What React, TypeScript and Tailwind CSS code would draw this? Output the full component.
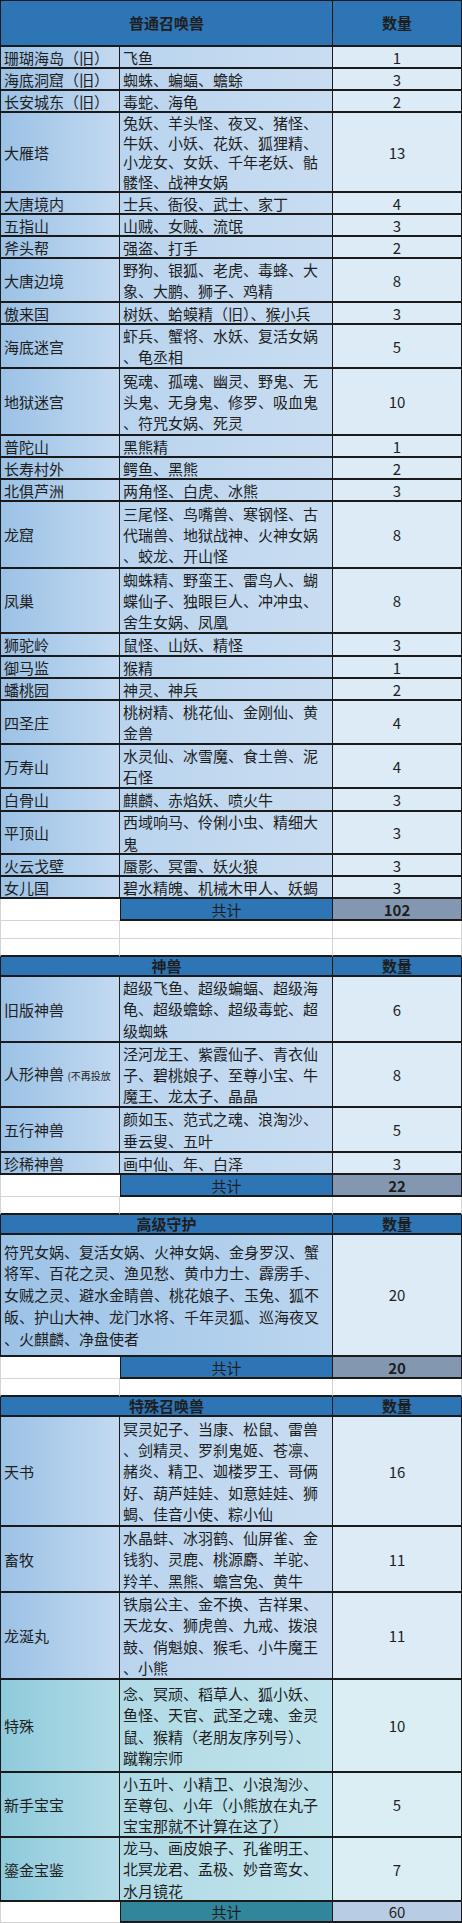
import type { ReactNode } from 'react'

type Row = {
  place: ReactNode
  lines: string[]
  count: string
  h: string
  teal?: boolean
  tight?: boolean
}

const dark = 'border-[#1a1a1a]'
const grid = 'grid grid-cols-[120px_213px_129px] grid-rows-1'

const blue = {
  c1: 'bg-linear-to-r from-[#9bc2e6] to-[#c3d9f0]',
  c2: 'bg-linear-to-r from-[#b9d4ee] to-[#c9ddf1]',
  c3: 'bg-[#ddebf7]',
}
const teal = {
  c1: 'bg-linear-to-r from-[#8ecadb] to-[#b3dce7]',
  c2: 'bg-linear-to-r from-[#afdae6] to-[#c1e3ec]',
  c3: 'bg-[#daeef3]',
}

const normalRows: Row[] = [
  { place: '珊瑚海岛（旧）', lines: ['飞鱼'], count: '1', h: 'h-[22px]' },
  { place: '海底洞窟（旧）', lines: ['蜘蛛、蝙蝠、蟾蜍'], count: '3', h: 'h-[22px]' },
  { place: '长安城东（旧）', lines: ['毒蛇、海龟'], count: '2', h: 'h-[22px]' },
  {
    place: '大雁塔',
    lines: ['兔妖、羊头怪、夜叉、猪怪、', '牛妖、小妖、花妖、狐狸精、', '小龙女、女妖、千年老妖、骷', '髅怪、战神女娲'],
    count: '13',
    h: 'h-[80px]',
    tight: true,
  },
  { place: '大唐境内', lines: ['士兵、衙役、武士、家丁'], count: '4', h: 'h-[22px]' },
  { place: '五指山', lines: ['山贼、女贼、流氓'], count: '3', h: 'h-[22px]' },
  { place: '斧头帮', lines: ['强盗、打手'], count: '2', h: 'h-[22px]' },
  { place: '大唐边境', lines: ['野狗、银狐、老虎、毒蜂、大', '象、大鹏、狮子、鸡精'], count: '8', h: 'h-[44px]' },
  { place: '傲来国', lines: ['树妖、蛤蟆精（旧）、猴小兵'], count: '3', h: 'h-[22px]' },
  { place: '海底迷宫', lines: ['虾兵、蟹将、水妖、复活女娲', '、龟丞相'], count: '5', h: 'h-[44px]' },
  {
    place: '地狱迷宫',
    lines: ['冤魂、孤魂、幽灵、野鬼、无', '头鬼、无身鬼、修罗、吸血鬼', '、符咒女娲、死灵'],
    count: '10',
    h: 'h-[67px]',
  },
  { place: '普陀山', lines: ['黑熊精'], count: '1', h: 'h-[22px]' },
  { place: '长寿村外', lines: ['鳄鱼、黑熊'], count: '2', h: 'h-[22px]' },
  { place: '北俱芦洲', lines: ['两角怪、白虎、冰熊'], count: '3', h: 'h-[22px]' },
  {
    place: '龙窟',
    lines: ['三尾怪、鸟嘴兽、寒钢怪、古', '代瑞兽、地狱战神、火神女娲', '、蛟龙、开山怪'],
    count: '8',
    h: 'h-[67px]',
  },
  {
    place: '凤巢',
    lines: ['蜘蛛精、野蛮王、雷鸟人、蝴', '蝶仙子、独眼巨人、冲冲虫、', '舍生女娲、凤凰'],
    count: '8',
    h: 'h-[65px]',
  },
  { place: '狮驼岭', lines: ['鼠怪、山妖、精怪'], count: '3', h: 'h-[23px]' },
  { place: '御马监', lines: ['猴精'], count: '1', h: 'h-[22px]' },
  { place: '蟠桃园', lines: ['神灵、神兵'], count: '2', h: 'h-[22px]' },
  { place: '四圣庄', lines: ['桃树精、桃花仙、金刚仙、黄', '金兽'], count: '4', h: 'h-[44px]' },
  { place: '万寿山', lines: ['水灵仙、冰雪魔、食土兽、泥', '石怪'], count: '4', h: 'h-[44px]' },
  { place: '白骨山', lines: ['麒麟、赤焰妖、喷火牛'], count: '3', h: 'h-[23px]' },
  { place: '平顶山', lines: ['西域响马、伶俐小虫、精细大', '鬼'], count: '3', h: 'h-[43px]' },
  { place: '火云戈壁', lines: ['蜃影、冥雷、妖火狼'], count: '3', h: 'h-[22px]' },
  { place: '女儿国', lines: ['碧水精魄、机械木甲人、妖蝎'], count: '3', h: 'h-[22px]' },
]

const beastRows: Row[] = [
  {
    place: '旧版神兽',
    lines: ['超级飞鱼、超级蝙蝠、超级海', '龟、超级蟾蜍、超级毒蛇、超', '级蜘蛛'],
    count: '6',
    h: 'h-[66px]',
  },
  {
    place: (
      <span className="whitespace-nowrap">
        人形神兽 <span className="text-[10px]">(不再投放</span>
      </span>
    ),
    lines: ['泾河龙王、紫霞仙子、青衣仙', '子、碧桃娘子、至尊小宝、牛', '魔王、龙太子、晶晶'],
    count: '8',
    h: 'h-[65px]',
  },
  { place: '五行神兽', lines: ['颜如玉、范式之魂、浪淘沙、', '垂云叟、五叶'], count: '5', h: 'h-[45px]' },
  { place: '珍稀神兽', lines: ['画中仙、年、白泽'], count: '3', h: 'h-[22px]' },
]

const guardLines = [
  '符咒女娲、复活女娲、火神女娲、金身罗汉、蟹',
  '将军、百花之灵、渔见愁、黄巾力士、霹雳手、',
  '女贼之灵、避水金睛兽、桃花娘子、玉兔、狐不',
  '皈、护山大神、龙门水将、千年灵狐、巡海夜叉',
  '、火麒麟、净盘使者',
]

const specialRows: Row[] = [
  {
    place: '天书',
    lines: ['冥灵妃子、当康、松鼠、雷兽', '、剑精灵、罗刹鬼姬、苍凛、', '赭炎、精卫、迦楼罗王、哥俩', '好、葫芦娃娃、如意娃娃、狮', '蝎、佳音小使、粽小仙'],
    count: '16',
    h: 'h-[110px]',
  },
  {
    place: '畜牧',
    lines: ['水晶蚌、冰羽鹤、仙屏雀、金', '钱豹、灵鹿、桃源麝、羊驼、', '羚羊、黑熊、蟾宫兔、黄牛'],
    count: '11',
    h: 'h-[66px]',
  },
  {
    place: '龙涎丸',
    lines: ['铁扇公主、金不换、吉祥果、', '天龙女、狮虎兽、九戒、拨浪', '鼓、俏魁娘、猴毛、小牛魔王', '、小熊'],
    count: '11',
    h: 'h-[87px]',
  },
  {
    place: '特殊',
    lines: ['念、冥顽、稻草人、狐小妖、', '鱼怪、天官、武圣之魂、金灵', '鼠、猴精（老朋友序列号）、', '蹴鞠宗师'],
    count: '10',
    h: 'h-[93px]',
    teal: true,
  },
  {
    place: '新手宝宝',
    lines: ['小五叶、小精卫、小浪淘沙、', '至尊包、小年（小熊放在丸子', '宝宝那就不计算在这了）'],
    count: '5',
    h: 'h-[65px]',
    teal: true,
  },
  {
    place: '鎏金宝鉴',
    lines: ['龙马、画皮娘子、孔雀明王、', '北冥龙君、孟极、妙音鸾女、', '水月镜花'],
    count: '7',
    h: 'h-[64px]',
    teal: true,
  },
]

const cell = 'min-h-0 overflow-hidden'

function Header({ title, h, top }: { title: string; h: string; top?: boolean }) {
  return (
    <div className={`${grid} ${h}`}>
      <div
        className={`${cell} col-span-2 flex items-center justify-center border-l border-r border-b-2 ${dark} ${top ? 'border-t' : ''} bg-[#2e75b6] font-bold leading-[18px] text-[#1e1e1e]`}
      >
        {title}
      </div>
      <div
        className={`${cell} flex items-center justify-center border-r border-b-2 ${dark} ${top ? 'border-t' : ''} bg-[#2e75b6] font-bold leading-[18px] text-[#1e1e1e]`}
      >
        数量
      </div>
    </div>
  )
}

function DataRow({ row }: { row: Row }) {
  const c = row.teal ? teal : blue
  return (
    <div className={`${grid} ${row.h}`}>
      <div className={`${cell} flex items-center border-l border-r border-b-2 ${dark} ${c.c1} pl-[3px] leading-[19px]`}>
        {row.place}
      </div>
      <div className={`${cell} flex flex-col justify-center border-r border-b-2 ${dark} ${c.c2} pl-[3px]`}>
        {row.lines.map((l, i) => (
          <div
            key={i}
            className={`shrink-0 whitespace-nowrap ${
              row.lines.length === 1 ? 'leading-[19px]' : row.tight ? 'leading-[19.5px]' : 'leading-[21.2px]'
            }`}
          >
            {l}
          </div>
        ))}
      </div>
      <div className={`${cell} flex items-center justify-center border-r border-b-2 ${dark} ${c.c3} leading-[19px]`}>
        {row.count}
      </div>
    </div>
  )
}

function TotalRow({ value, h, last }: { value: string; h: string; last?: boolean }) {
  return (
    <div className={`${grid} ${h}`}>
      <div className={`${cell} border-l border-b border-[#d4d4d4] bg-white`} />
      <div
        className={`${cell} flex items-center justify-center border-l border-r border-b-2 ${dark} ${last ? 'bg-[#31869b]' : 'bg-[#2e75b6]'} leading-[19px] text-[#1e1e1e]`}
      >
        共计
      </div>
      <div
        className={`${cell} flex items-center justify-center border-r border-b-2 ${dark} ${last ? 'bg-[#b8cce4]' : 'bg-[#8497b0] font-bold'} leading-[19px] text-[#1e1e1e]`}
      >
        {value}
      </div>
    </div>
  )
}

function BlankRow({ h, edge }: { h: string; edge?: boolean }) {
  return (
    <div className={`${grid} ${h}`}>
      <div className={`${cell} border-l border-r border-b border-[#d4d4d4] ${edge ? 'border-b-2 border-b-[#1a1a1a]' : ''} bg-white`} />
      <div className={`${cell} border-r border-b border-[#d4d4d4] ${edge ? 'border-b-2 border-b-[#1a1a1a]' : ''} bg-white`} />
      <div className={`${cell} border-r border-b border-[#d4d4d4] ${edge ? 'border-b-2 border-b-[#1a1a1a]' : ''} bg-white`} />
    </div>
  )
}

export default function App() {
  return (
    <div className="w-[462px] bg-white font-['Noto_Sans_CJK_SC','Noto_Sans',sans-serif] text-[15px] text-[#1e1e1e]">
      <Header title="普通召唤兽" h="h-[47px]" top />
      {normalRows.map((r, i) => (
        <DataRow key={i} row={r} />
      ))}
      <TotalRow value="102" h="h-[22px]" />
      <BlankRow h="h-[18px]" />
      <BlankRow h="h-[18px]" edge />

      <Header title="神兽" h="h-[20px]" />
      {beastRows.map((r, i) => (
        <DataRow key={i} row={r} />
      ))}
      <TotalRow value="22" h="h-[22px]" />
      <BlankRow h="h-[18px]" edge />

      <Header title="高级守护" h="h-[20px]" />
      <div className={`${grid} h-[122px]`}>
        <div
          className={`${cell} col-span-2 flex flex-col justify-center border-l border-r border-b-2 ${dark} bg-linear-to-r from-[#9bc2e6] to-[#bcd6ef] pl-[3px]`}
        >
          {guardLines.map((l, i) => (
            <div key={i} className="shrink-0 whitespace-nowrap leading-[21.7px]">
              {l}
            </div>
          ))}
        </div>
        <div className={`${cell} flex items-center justify-center border-r border-b-2 ${dark} bg-[#ddebf7]`}>20</div>
      </div>
      <TotalRow value="20" h="h-[22px]" />
      <BlankRow h="h-[18px]" edge />

      <Header title="特殊召唤兽" h="h-[20px]" />
      {specialRows.map((r, i) => (
        <DataRow key={i} row={r} />
      ))}
      <TotalRow value="60" h="h-[21px]" last />
    </div>
  )
}
